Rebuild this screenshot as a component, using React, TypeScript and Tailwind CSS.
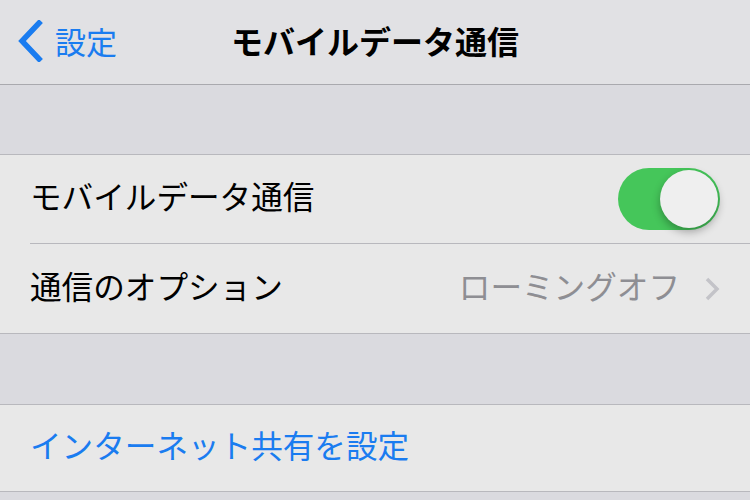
export default function App() {
  const font = { fontFamily: '"Noto Sans CJK JP", "Noto Sans", sans-serif' };

  return (
    <div
      className="w-[750px] h-[500px] overflow-hidden bg-[#dadadf] text-[31.6px] leading-none"
      style={font}
    >
      {/* nav bar */}
      <div className="h-[85px] bg-[#e1e1e4] border-b border-[#a9a9ae] grid grid-cols-[1fr_auto_1fr] items-center">
        <div className="flex items-center pl-[17px] text-[#1a7cf0]">
          <svg width="26" height="42" viewBox="0 0 26 42" className="mt-[-2px]">
            <path d="M22 3 L5 21 L22 39" fill="none" stroke="#1a7cf0" strokeWidth="5.5" strokeLinecap="square" />
          </svg>
          <span className="ml-[12px] mt-[-4px] text-[31px]">設定</span>
        </div>
        <div className="font-bold text-black mt-[-4px] text-[32px]">モバイルデータ通信</div>
        <div />
      </div>

      <div className="h-[69px]" />

      {/* group 1 */}
      <div className="bg-[#e8e8e8] border-y border-[#b8b8bd]">
        <div className="h-[88px] flex items-center pl-[30px] pr-[30px]">
          <span className="flex-1 text-black mt-[-6px]">モバイルデータ通信</span>
          <div className="w-[102px] h-[62px] rounded-full bg-[#45c65a] relative">
            <div className="absolute right-[2px] top-[2px] w-[58px] h-[58px] rounded-full bg-[#efefef] shadow-[0_4px_8px_rgba(0,0,0,0.3)]" />
          </div>
        </div>
        <div className="ml-[30px] h-px bg-[#b8b8bd]" />
        <div className="h-[89px] flex items-center pl-[30px] pr-[30px]">
          <span className="flex-1 text-black mt-[-6px]">通信のオプション</span>
          <span className="text-[#8e8e93] mt-[-6px]">ローミングオフ</span>
          <svg width="16" height="26" viewBox="0 0 16 26" className="ml-[24px]">
            <path d="M3 3 L13 13 L3 23" fill="none" stroke="#c3c3c8" strokeWidth="3.5" />
          </svg>
        </div>
      </div>

      <div className="h-[70px]" />

      {/* group 2 */}
      <div className="bg-[#e8e8e8] border-y border-[#b8b8bd]">
        <div className="h-[86px] flex items-center pl-[30px]">
          <span className="text-[#1a7cf0] mt-[-6px]">インターネット共有を設定</span>
        </div>
      </div>
    </div>
  );
}
